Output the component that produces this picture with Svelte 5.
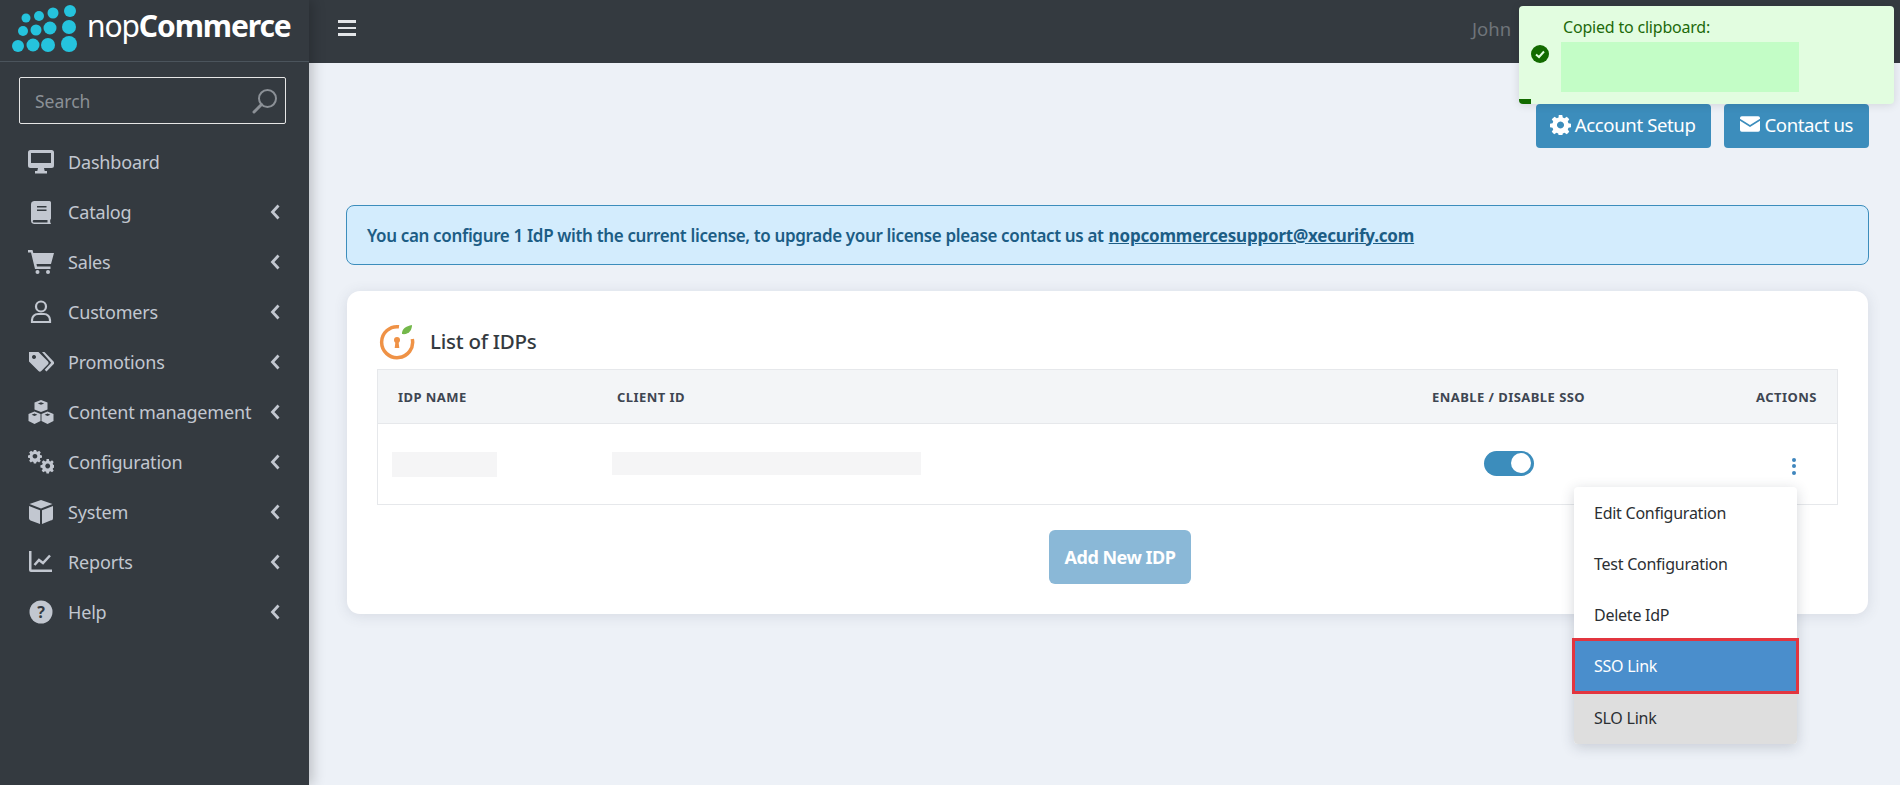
<script>
  const menu = [
    { label: 'Dashboard', icon: 'desktop', arrow: false },
    { label: 'Catalog', icon: 'book', arrow: true },
    { label: 'Sales', icon: 'cart', arrow: true },
    { label: 'Customers', icon: 'user', arrow: true },
    { label: 'Promotions', icon: 'tags', arrow: true },
    { label: 'Content management', icon: 'cubes', arrow: true },
    { label: 'Configuration', icon: 'cogs', arrow: true },
    { label: 'System', icon: 'cube', arrow: true },
    { label: 'Reports', icon: 'chart', arrow: true },
    { label: 'Help', icon: 'help', arrow: true }
  ];
  const dots = [
    [25,18,4.5],[38,16,5],[52,13,5.5],[69,11,6],
    [22,31,5],[35,30,5.5],[49,28,6.5],[68,27,7],
    [17,46,6],[32,45,6.5],[47,45,7],[68,44,8]
  ];
  const gear = 'M10 1h4l.6 3 2 .8 2.600-1.700 2.800 2.800-1.700 2.600.8 2 3 .6v4l-3 .6-.8 2 1.700 2.600-2.800 2.800-2.600-1.700-2 .8-.6 3h-4l-.6-3-2-.8-2.600 1.700-2.800-2.800 1.700-2.600-.8-2-3-.6v-4l3-.6.8-2-1.700-2.600L5.200 3.100l2.600 1.700 2-.8z';
  const hole = 'M12 8.500a4 4 0 1 0 .01 0z';
</script>

<div class="page">
  <aside class="sidebar">
    <div class="brand">
      <svg class="mark" viewBox="0 0 80 56" aria-hidden="true">
        {#each dots as d}<circle cx={d[0]} cy={d[1]} r={d[2]} fill="#25c3dd" />{/each}
      </svg>
      <span class="word"><span class="thin">nop</span><b>Commerce</b></span>
    </div>
    <div class="search">
      <span>Search</span>
      <svg viewBox="0 0 26 26" class="glass" aria-hidden="true">
        <circle cx="15.500" cy="10.500" r="8.500" fill="none" stroke="#8b9096" stroke-width="2" />
        <path d="M9.500 16.500 2 24" stroke="#8b9096" stroke-width="3" stroke-linecap="round" />
      </svg>
    </div>
    <nav>
      {#each menu as m}
        <div class="item">
          <svg class="ico" viewBox="0 0 26 24" fill="#c2c7d0" aria-hidden="true">
            {#if m.icon === 'desktop'}
              <path fill-rule="evenodd" d="M2.500 0h21A2.500 2.500 0 0 1 26 2.500v13a2.500 2.500 0 0 1-2.500 2.500h-21A2.500 2.500 0 0 1 0 15.500v-13A2.500 2.500 0 0 1 2.500 0zM3 3v10h20V3z" />
              <path d="M10 18h6l.7 3h2.300v2.500H7V21h2.300z" />
            {:else if m.icon === 'book'}
              <path fill-rule="evenodd" d="M6 1h15.500a1.500 1.500 0 0 1 1.500 1.500v16c0 .6-.3 1-.8 1.300v2.700c.5.200.8.500.8 1 0 .3-.3.500-.8.500H6a3.500 3.500 0 0 1-3-3.500V4.500A3.500 3.500 0 0 1 6 1zm3 5v1.500h9.500V6zm0 3.500V11h9.500V9.500zM6 20a1.300 1.300 0 0 0 0 2.600h13.500V20z" />
            {:else if m.icon === 'cart'}
              <path d="M0 0h4.500l.8 3H26l-3 11H8.500l.5 2.500h13.500v2.500H7L3 2.500H0z" />
              <circle cx="9.500" cy="22" r="2" /><circle cx="20" cy="22" r="2" />
            {:else if m.icon === 'user'}
              <circle cx="13" cy="6.500" r="5" fill="none" stroke="#c2c7d0" stroke-width="2.200" />
              <path fill="none" stroke="#c2c7d0" stroke-width="2.200" d="M4 22v-2a6 6 0 0 1 6-6h6a6 6 0 0 1 6 6v2z" />
            {:else if m.icon === 'tags'}
              <path fill-rule="evenodd" d="M1 2h9.500L20 11.500a2 2 0 0 1 0 2.800l-6.700 6.700a2 2 0 0 1-2.800 0L1 11.500zM6 5a2 2 0 1 0 .01 0z" />
              <path d="M14 2h2.500L25.500 11.500a2 2 0 0 1 0 2.800L18.500 21.500l-1.800-1.700 6.500-7.100z" />
            {:else if m.icon === 'cubes'}
              <path d="M13 0l6.500 2.400v7L13 12 6.500 9.400v-7zM13 2.200 9.800 3.400 13 4.700l3.200-1.300z" fill-rule="evenodd" />
              <path d="M6.500 11.500 12.500 14v7L6.500 24 .5 21v-7zM6.500 13.500 3.600 14.700l2.900 1.200 2.900-1.200z" fill-rule="evenodd" />
              <path d="M19.500 11.500 25.500 14v7l-6 3-6-3v-7zM19.500 13.500l-2.900 1.200 2.900 1.200 2.900-1.200z" fill-rule="evenodd" />
            {:else if m.icon === 'cogs'}
              <g transform="translate(0 -1) scale(.58)"><path fill-rule="evenodd" d={gear + hole} /></g>
              <g transform="translate(12.500 8.500) scale(.6)"><path fill-rule="evenodd" d={gear + hole} /></g>
            {:else if m.icon === 'cube'}
              <path d="M13 0 24.500 4 13 8.500 1.500 4z" />
              <path d="M1 6 12 10.300V24L2.500 20.500A2.500 2.500 0 0 1 1 18z" />
              <path d="M25 6 14 10.300V24l8.500-3.500A2.500 2.500 0 0 0 25 18z" />
            {:else if m.icon === 'chart'}
              <path d="M1 1h2.500v18.500H24V22H3a2 2 0 0 1-2-2z" />
              <path fill="none" stroke="#c2c7d0" stroke-width="2.500" d="M6.500 15l4.500-5 4 3 7-7.500" />
            {:else}
              <circle cx="13" cy="12" r="11.500" />
              <text x="13" y="17.500" text-anchor="middle" class="q">?</text>
            {/if}
          </svg>
          <span class="lbl">{m.label}</span>
          {#if m.arrow}
            <svg class="chev" viewBox="0 0 10 16" aria-hidden="true"><path d="M8.500 1.500 2.500 8l6 6.500" fill="none" stroke="#c2c7d0" stroke-width="2.800" /></svg>
          {/if}
        </div>
      {/each}
    </nav>
  </aside>

  <div class="main">
    <header class="top">
      <span class="burger"><i></i><i></i><i></i></span>
      <span class="user">John</span>
    </header>
    <main class="content">
      <div class="actions">
        <button class="btn acct">
          <svg viewBox="0 0 24 24" class="bi" aria-hidden="true"><path fill="#fff" fill-rule="evenodd" d={gear + hole} /></svg>
          Account Setup
        </button>
        <button class="btn">
          <svg viewBox="0 0 22 17" class="bi mail" aria-hidden="true"><path fill="#fff" d="M2 0h18a2 2 0 0 1 2 2v.6L11 9.500 0 2.600V2a2 2 0 0 1 2-2zM0 4.800l11 6.900 11-6.900V15a2 2 0 0 1-2 2H2a2 2 0 0 1-2-2z" /></svg>
          Contact us
        </button>
      </div>

      <div class="alert">You can configure 1 IdP with the current license, to upgrade your license please contact us at <u>nopcommercesupport@xecurify.com</u></div>

      <section class="card">
        <div class="title">
          <svg viewBox="0 0 36 36" class="miniorange" aria-hidden="true">
            <path d="M20 2.800A15.500 15.500 0 1 0 33.300 15" fill="none" stroke="#ef9246" stroke-width="3.500" />
            <circle cx="18" cy="16" r="3" fill="#ef9246" /><path d="M16.500 17h3l.8 7h-4.600z" fill="#ef9246" />
            <path d="M23 10c-.5-5 4-8 10-9 0 5-3 10-10 9z" fill="#74b84b" />
          </svg>
          <h2>List of IDPs</h2>
        </div>
        <div class="table">
          <div class="row head">
            <span class="c1">IDP NAME</span><span class="c2">CLIENT ID</span><span class="c3">ENABLE / DISABLE SSO</span><span class="c4">ACTIONS</span>
          </div>
          <div class="row body">
            <span class="c1"><i class="mask m1"></i></span>
            <span class="c2"><i class="mask m2"></i></span>
            <span class="c3"><i class="toggle"><i></i></i></span>
            <span class="c4"><i class="kebab"><i></i><i></i><i></i></i></span>
          </div>
        </div>
        <div class="addwrap"><button class="add">Add New IDP</button></div>
      </section>
    </main>
  </div>

  <div class="menu">
    <div class="mi">Edit Configuration</div>
    <div class="mi">Test Configuration</div>
    <div class="mi">Delete IdP</div>
    <div class="mi sso">SSO Link</div>
    <div class="mi slo">SLO Link</div>
  </div>

  <div class="toast">
    <svg viewBox="0 0 18 18" class="tick" aria-hidden="true"><circle cx="9" cy="9" r="9" fill="#136b00" /><path d="M5 9.500 8 12l5-5.500" fill="none" stroke="#e2fde0" stroke-width="2" /></svg>
    <div class="tbody">
      <div>Copied to clipboard:</div>
      <div class="tblank"></div>
    </div>
    <i class="progress"></i>
  </div>
</div>

<style>
  :global(body) { margin: 0; font-family: "Noto Sans", "Open Sans", sans-serif; background: #edf1f7; }
  .page { display: flex; height: 785px; overflow: hidden; position: relative; }
  .sidebar { width: 309px; flex: none; background: #343a40; box-shadow: 4px 0 12px rgba(0,0,0,.2); z-index: 2; }
  .brand { height: 62px; box-sizing: border-box; border-bottom: 1px solid #4b545c; display: flex; align-items: flex-start; }
  .mark { width: 80px; height: 56px; flex: none; margin-left: 1px; }
  .word { color: #fff; font-size: 30px; letter-spacing: -1.100px; margin: 6px 0 0 6px; line-height: 40px; }
  .word b { font-weight: 700; }
  .search { margin: 15px 0 0 19px; width: 267px; height: 47px; box-sizing: border-box; border: 1px solid #e6e6e6; border-radius: 2px; display: flex; align-items: center; justify-content: space-between; padding: 0 7px 0 15px; color: #8b9096; font-size: 17.500px; }
  .glass { width: 26px; height: 26px; }
  nav { margin-top: 13px; }
  .item { height: 50px; display: flex; align-items: center; color: #c2c7d0; padding-left: 28px; position: relative; }
  .ico { width: 26px; height: 24px; flex: none; }
  .q { font: 700 16px "Noto Sans", sans-serif; fill: #343a40; }
  .lbl { margin-left: 14px; font-size: 18px; letter-spacing: -.17px; white-space: nowrap; margin-top: -1px; }
  .chev { position: absolute; left: 270px; top: 17px; width: 10px; height: 16px; }
  .main { flex: 1; min-width: 0; }
  .top { height: 63px; background: #343a40; display: flex; align-items: center; padding-left: 29px; box-sizing: border-box; color: #6f747a; position: relative; }
  .burger { display: flex; flex-direction: column; gap: 4px; width: 18px; margin-top: -7px; }
  .burger i { height: 2.500px; background: #e3e5e8; display: block; }
  .user { position: absolute; left: 1163px; top: 16px; font-size: 18.500px; }
  .content { padding: 41px 31px 0 37px; }
  .actions { display: flex; justify-content: flex-end; gap: 13px; }
  .btn { height: 44px; border: 0; border-radius: 4px; background: #3c8dbc; color: #fff; font: 18.600px "Noto Sans", sans-serif; letter-spacing: -.4px; display: flex; align-items: center; gap: 4px; padding: 0 16px 4px 16px; }
  .btn.acct { padding-left: 14px; }
  .bi { width: 21px; height: 21px; }
  .bi.mail { width: 20px; height: 16px; }
  .alert { margin-top: 57px; height: 60px; box-sizing: border-box; background: #d3ecfd; border: 1px solid #3c8dbc; border-radius: 8px; color: #1c5d85; font-size: 17px; font-weight: 600; letter-spacing: -.35px; display: flex; align-items: center; padding-left: 20px; gap: 5px; white-space: nowrap; }
  .alert u { font-weight: 700; letter-spacing: -.2px; }
  .card { margin: 26px 1px 0; background: #fff; border-radius: 13px; height: 323px; padding: 29px 30px 0; box-sizing: border-box; box-shadow: 0 2px 14px rgba(60,70,90,.13); }
  .title { display: flex; align-items: center; height: 44px; margin-bottom: 5px; }
  .miniorange { width: 36px; height: 36px; margin-left: 2px; flex: none; }
  h2 { margin: -2px 0 0 15px; font-size: 20.500px; font-weight: 500; color: #343a40; letter-spacing: -.25px; }
  .table { border: 1px solid #e6e8eb; height: 136px; box-sizing: border-box; }
  .row { display: flex; align-items: center; position: relative; }
  .head { height: 54px; background: #f3f5f7; border-bottom: 1px solid #e6e8eb; box-sizing: border-box; font-size: 13px; font-weight: 700; letter-spacing: .45px; color: #3e4652; }
  .body { height: 80px; }
  .c1 { width: 239px; padding-left: 20px; box-sizing: border-box; flex: none; }
  .c2 { width: 815px; flex: none; }
  .c3 { width: 324px; flex: none; white-space: nowrap; }
  .c4 { flex: 1; white-space: nowrap; }
  .body .c1 { padding-left: 14px; }
  .body .c2 { margin-left: -5px; margin-right: 5px; }
  .mask { display: block; background: #f5f5f6; height: 25px; }
  .m1 { width: 105px; margin-top: 1px; }
  .m2 { width: 309px; height: 23px; margin-top: -2px; }
  .toggle { display: block; width: 50px; height: 25px; border-radius: 13px; background: #3c8dbc; margin-left: 52px; position: relative; margin-top: -2px; }
  .toggle i { position: absolute; right: 3px; top: 2.500px; width: 20px; height: 20px; border-radius: 50%; background: #fff; }
  .kebab { display: flex; flex-direction: column; gap: 2.500px; margin-left: 36px; width: 4px; margin-top: 4px; }
  .kebab i { height: 4px; width: 4px; border-radius: 50%; background: #3f86bd; display: block; }
  .addwrap { display: flex; justify-content: center; margin-top: 25px; }
  .add { width: 142px; height: 54px; border: 0; border-radius: 6px; background: #8ab8d7; color: #fff; font: 700 18px "Noto Sans", sans-serif; letter-spacing: -.5px; margin-left: 25px; }
  .menu { position: absolute; left: 1574px; top: 487px; width: 223px; background: #fff; border-radius: 4px; box-shadow: 0 3px 14px rgba(40,50,70,.2); z-index: 3; color: #2b2f33; font-size: 16px; letter-spacing: -.25px; }
  .mi { height: 51px; display: flex; align-items: center; padding-left: 20px; }
  .sso { background: #4a8ecc; color: #fff; outline: 3px solid #e2353f; outline-offset: -1px; position: relative; z-index: 1; height: 52px; }
  .slo { background: #dedede; height: 52px; border-radius: 0 0 4px 4px; }
  .toast { position: absolute; left: 1519px; top: 6px; width: 375px; height: 98px; background: #e2fde0; border-radius: 4px; box-shadow: 0 1px 10px rgba(0,0,0,.12); z-index: 4; color: #1d6a0a; font-size: 16px; letter-spacing: -.2px; display: flex; align-items: center; overflow: hidden; box-sizing: border-box; padding-left: 12px; }
  .tick { width: 18px; height: 18px; flex: none; margin-top: -2px; }
  .tbody { margin-left: 14px; align-self: flex-start; margin-top: 9px; line-height: 24px; }
  .tblank { width: 238px; height: 50px; background: #c3fdc6; margin: 3px 0 0 -2px; }
  .progress { position: absolute; left: 0; bottom: 0; width: 12px; height: 5px; background: #136b00; }
</style>
